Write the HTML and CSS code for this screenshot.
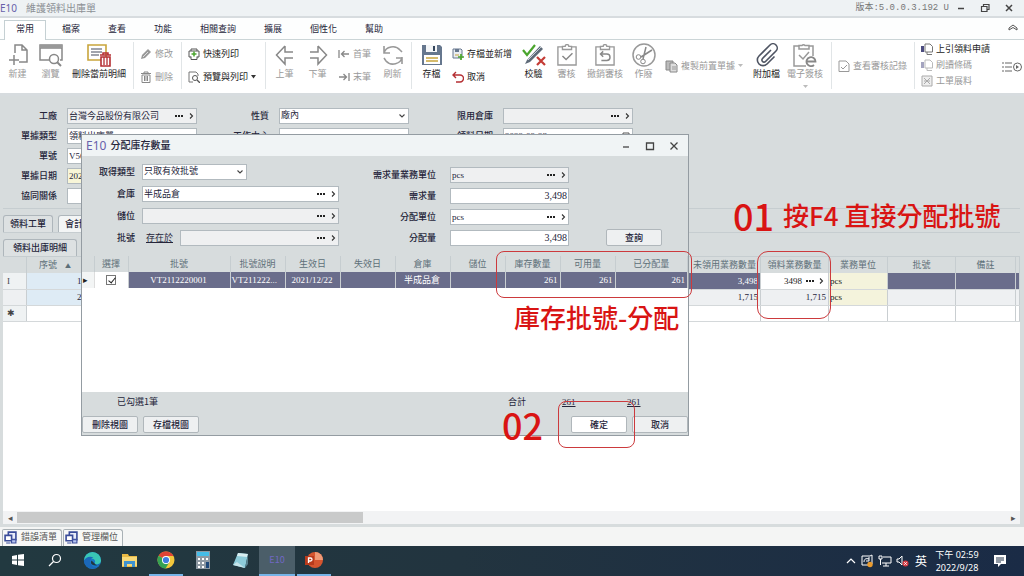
FILE: index.html
```html
<!DOCTYPE html>
<html lang="zh-Hant">
<head>
<meta charset="utf-8">
<title>維護領料出庫單</title>
<link rel="stylesheet" href="styles.css">
</head>
<body>
<svg class="defs" aria-hidden="true">
  <symbol id="more" viewBox="0 0 10 6"><path d="M1 2h2v2H1zM4 2h2v2H4zM7 2h2v2H7z" fill="#222"/></symbol>
  <symbol id="next" viewBox="0 0 6 8"><path d="M2 1.500 4.500 4 2 6.500" fill="none" stroke="#333" stroke-width="1.100"/></symbol>
  <symbol id="down" viewBox="0 0 8 6"><path d="M1.500 1.500 4 4l2.500-2.500" fill="none" stroke="#444" stroke-width="1.100"/></symbol>
  <symbol id="clip" viewBox="0 0 22 24"><path d="M6 3H1v20h20V3h-5M6 2.500h3a2 2 0 0 1 4 0h3V6H6z" fill="none" stroke="#999" stroke-width="1.500"/></symbol>
  <symbol id="doc" viewBox="0 0 12 12"><path d="M4 1h5l2.500 2.500V9H4z" fill="#fff" stroke="#777"/><path d="M6 9v2.500h5" fill="none" stroke="#777"/><path d="M0 3h3v6H0z" fill="#4c4c80"/></symbol>
  <symbol id="windows" viewBox="0 0 12 12"><path d="M4 1h7v7H4z" fill="#e8ecfa" stroke="#3a4c9a" stroke-width="1.500"/><path d="M1 4h6v5H1z" fill="#fff" stroke="#3a4c9a" stroke-width="1.500"/><path d="M7 8h4v3H7zM2 11h4" fill="#b7c6f3" stroke="#3a4c9a"/></symbol>
</svg>
<div class="app">
  <header class="titlebar">
    <span class="brand">E10</span>
    <span class="app-title">維護領料出庫單</span>
    <span class="version">版本:5.0.0.3.192 U</span>
    <div class="win-buttons">
      <button type="button" aria-label="最小化"><svg width="10" height="10" viewBox="0 0 10 10"><path d="M2 5.500h6" stroke="#444" stroke-width="1.500"/></svg></button>
      <button type="button" aria-label="還原"><svg width="10" height="10" viewBox="0 0 10 10"><path d="M1.500 3.500h5.500v5H1.500zM3.500 3.500v-2h5.500v5H7" fill="none" stroke="#444" stroke-width="1.200"/></svg></button>
      <button type="button" aria-label="關閉"><svg width="10" height="10" viewBox="0 0 10 10"><path d="m2 2 6 6m0-6L2 8" stroke="#444" stroke-width="1.500"/></svg></button>
    </div>
  </header>

  <nav class="tabs">
    <button type="button" class="tab active">常用</button>
    <button type="button" class="tab">檔案</button>
    <button type="button" class="tab">查看</button>
    <button type="button" class="tab">功能</button>
    <button type="button" class="tab">相關查詢</button>
    <button type="button" class="tab">擴展</button>
    <button type="button" class="tab">個性化</button>
    <button type="button" class="tab">幫助</button>
    <button type="button" class="collapse" aria-label="收合"><svg width="10" height="8" viewBox="0 0 10 8"><path d="m1 4 4-3 4 3v2L5 3.500 1 6z" fill="none" stroke="#555"/></svg></button>
  </nav>

  <div class="ribbon">
    <div class="group lead">
      <button type="button" class="big off"><svg width="20" height="24" viewBox="0 0 20 24"><path d="M7 10V2h7l5 5v12h-8M14 2v5h5M6 12v10M1 17h10" fill="none" stroke="#888" stroke-width="1.500"/></svg>新建</button>
      <button type="button" class="big off"><svg width="24" height="24" viewBox="0 0 24 24"><path d="M10 17H1V2h22v15h-2M1 5h22" fill="none" stroke="#888" stroke-width="1.500"/><path d="M1 2h22v3H1z" fill="#999"/><circle cx="15" cy="16" r="4.500" fill="#fff" stroke="#888" stroke-width="1.500"/><path d="m18 19 4 4" stroke="#888" stroke-width="2"/></svg>瀏覽</button>
      <button type="button" class="big wide"><svg width="26" height="24" viewBox="0 0 26 24"><path d="M2 2h18v15H2z" fill="#fff" stroke="#c9a53c" stroke-width="1.600"/><path d="M5 6h11M5 9h11M5 12h8" stroke="#444a5c" stroke-width="1.200"/><path d="M14 12h11M17 12v-2h5v2" fill="none" stroke="#b52f33" stroke-width="1.500"/><path d="M15 14h9v9h-9z" fill="#fff" stroke="#b52f33" stroke-width="1.600"/><path d="M18 14v8M21 14v8" stroke="#b52f33" stroke-width="1.300"/></svg>刪除當前明細</button>
    </div>
    <div class="group">
      <div class="stack">
        <button type="button" class="small off"><svg width="12" height="12" viewBox="0 0 12 12"><path d="m1 11 1-4 6-6 3 3-6 6z" fill="#999"/><path d="m3 9 5-5" stroke="#ddd"/></svg>修改</button>
        <button type="button" class="small off"><svg width="12" height="12" viewBox="0 0 12 12"><path d="M2 4h8v7.500H2z" fill="none" stroke="#888"/><path d="M1 2.500h10M4 2.500V1h4v1.500M4.500 5v5M6 5v5M7.500 5v5" fill="none" stroke="#888"/></svg>刪除</button>
      </div>
    </div>
    <div class="group">
      <div class="stack print">
        <button type="button" class="small"><svg width="12" height="12" viewBox="0 0 12 12"><path d="M3 3V1h6v2M3 9H1V3h10v6H9M3 8.500v3h6v-3" fill="none" stroke="#555"/><path d="M6 3.500v5M3.500 6h5" stroke="#4ba52e" stroke-width="1.500"/></svg>快速列印</button>
        <button type="button" class="small"><svg width="12" height="12" viewBox="0 0 12 12"><path d="M5 11H1V1h7l2 2v2" fill="none" stroke="#777"/><circle cx="7" cy="7" r="2.500" fill="none" stroke="#555"/><path d="m9 9 3 3" stroke="#555" stroke-width="1.300"/></svg>預覽與列印<svg class="caret" width="5" height="4" viewBox="0 0 5 4"><path d="M0 0h5L2.500 3.500z" fill="#333"/></svg></button>
      </div>
    </div>
    <div class="group nav-group">
      <button type="button" class="big off"><svg width="20" height="24" viewBox="0 0 20 24"><path d="M10 3 1.500 12l8.500 9v-6h8M10 3v6h8" fill="none" stroke="#888" stroke-width="1.500"/></svg>上筆</button>
      <button type="button" class="big off"><svg width="20" height="24" viewBox="0 0 20 24"><path d="M10 3l8.500 9-8.500 9v-6H2M10 3v6H2" fill="none" stroke="#888" stroke-width="1.500"/></svg>下筆</button>
      <div class="stack">
        <button type="button" class="small off"><svg width="12" height="12" viewBox="0 0 12 12"><path d="M1 2v8M11 6H3.500M6.500 3l-3 3 3 3" fill="none" stroke="#888" stroke-width="1.300"/></svg>首筆</button>
        <button type="button" class="small off"><svg width="12" height="12" viewBox="0 0 12 12"><path d="M11 2v8M1 6h7.500M5.500 3l3 3-3 3" fill="none" stroke="#888" stroke-width="1.300"/></svg>末筆</button>
      </div>
      <button type="button" class="big off"><svg width="20" height="24" viewBox="0 0 20 24"><path d="M1 10a9 8 0 0 1 16-3l2 2M1 3v7h6M19 14a9 8 0 0 1-16 4l-2-3M19 21v-6h-6" fill="none" stroke="#999" stroke-width="1.600"/></svg>刷新</button>
    </div>
    <div class="group nav-group tools">
      <button type="button" class="big"><svg width="20" height="24" viewBox="0 0 20 24"><path d="M0 2h18l2 2v18H0z" fill="#66778e"/><path d="M4 2h11v7H4z" fill="#f4f6f8"/><path d="M11 3h2v5h-2z" fill="#34455c"/><path d="M2 12h16v9H2z" fill="#fff"/><path d="M4 15h12M4 18h12" stroke="#c9a53c" stroke-width="1.500"/></svg>存檔</button>
      <div class="stack save">
        <button type="button" class="small"><svg width="12" height="12" viewBox="0 0 12 12"><path d="M1 1h8l1 1v8H1z" fill="#e9edf2" stroke="#66778e"/><path d="M3 1h4v3H3z" fill="#66778e"/><path d="M3 7h4" stroke="#c9a53c"/><path d="M9 6v6M6 9h6" stroke="#4ba52e" stroke-width="1.700"/></svg>存檔並新增</button>
        <button type="button" class="small"><svg width="12" height="12" viewBox="0 0 12 12"><path d="M4 1 1 4l3 3M1 4h7a3 3 0 0 1 0 7H4" fill="none" stroke="#b52f33" stroke-width="1.400"/></svg>取消</button>
      </div>
      <button type="button" class="big"><svg width="24" height="24" viewBox="0 0 24 24"><path d="m5 17 13-14 3 3L8 19l-5 2z" fill="#5e6a78"/><path d="M6 17 19 4" stroke="#c8d0d8"/><path d="m1 7 4 5 8-10" fill="none" stroke="#4ba52e" stroke-width="2.200"/><path d="m15 14 8 8m0-8-8 8" stroke="#c43b35" stroke-width="2.200"/></svg>校驗</button>
      <button type="button" class="big off"><svg width="20" height="24" viewBox="0 0 22 24"><use href="#clip"/><path d="m6 13 4 4 7-7" fill="none" stroke="#888" stroke-width="1.600"/></svg>審核</button>
      <button type="button" class="big mid off"><svg width="20" height="24" viewBox="0 0 22 24"><use href="#clip"/><path d="M9 8 6 11l3 3M6 11h7a3 3 0 0 1 0 7H7" fill="none" stroke="#888" stroke-width="1.600"/></svg>撤銷審核</button>
      <button type="button" class="big off"><svg width="24" height="24" viewBox="0 0 24 24"><circle cx="12" cy="12" r="11" fill="none" stroke="#999" stroke-width="1.500"/><path d="M20 7 9 14M14 4l-3 12" stroke="#888" stroke-width="1.500"/><circle cx="6.500" cy="14" r="2.300" fill="none" stroke="#888"/><circle cx="11" cy="18.500" r="2.300" fill="none" stroke="#888"/></svg>作廢</button>
      <button type="button" class="small copy off"><svg width="13" height="14" viewBox="0 0 13 14"><path d="M1 2h7v9H1z" fill="#bbb" stroke="#888"/><path d="M5 4h5l2 2v7H5z" fill="#ddd" stroke="#888"/><path d="M7 8h4M7 10h4" stroke="#999"/></svg>複製前置單據<svg class="caret" width="5" height="4" viewBox="0 0 5 4"><path d="M0 0h5L2.500 3z" fill="#bbb"/></svg></button>
      <button type="button" class="big"><svg width="24" height="24" viewBox="0 0 24 24"><path d="M16 7 7.500 15.500a2 2 0 0 0 3 3L21 8a4 4 0 0 0-6-6L4 13a5.500 5.500 0 0 0 8 8l7.500-7.500" fill="none" stroke="#4e5462" stroke-width="1.600"/></svg>附加檔</button>
      <button type="button" class="big mid off"><svg width="24" height="24" viewBox="0 0 24 24"><path d="M6 3H1v20h12M16 3h4v10M6 2.500h3a2 2 0 0 1 3 0h4V6H6zM6 12l4 4 6-7" fill="none" stroke="#999" stroke-width="1.500"/><path d="M14 18.500h8.500a4.500 4.500 0 1 0-1.500 3.500" fill="none" stroke="#888" stroke-width="1.800"/></svg>電子簽核<svg class="under" width="5" height="4" viewBox="0 0 5 4"><path d="M0 0h5L2.500 3z" fill="#bbb"/></svg></button>
    </div>
    <div class="group">
      <button type="button" class="small off"><svg width="12" height="12" viewBox="0 0 12 12"><path d="M1 1h7l3 3v7.500H1z" fill="none" stroke="#999"/><path d="m3 7 2 2 4-4" fill="none" stroke="#999"/></svg>查看審核記錄</button>
    </div>
    <div class="group last">
      <div class="stack tight">
        <button type="button" class="small"><svg width="12" height="12"><use href="#doc"/></svg>上引領料申請</button>
        <button type="button" class="small off"><svg class="dim" width="12" height="12"><use href="#doc"/></svg>刷讀條碼</button>
        <button type="button" class="small off"><svg width="12" height="12" viewBox="0 0 12 12"><path d="M1 1h10v10H1z" fill="#eee" stroke="#aaa"/><path d="m3 3 6 6M9 3 3 9M3 6h2M7 6h2" stroke="#aaa"/></svg>工單展料</button>
      </div>
    </div>
    <button type="button" class="more-tools" aria-label="更多"><svg width="20" height="12" viewBox="0 0 20 12"><path d="M0 2h2M3 2h7M0 6h2M3 6h7M0 10h2M3 10h7" stroke="#666"/><circle cx="15.500" cy="6" r="4" fill="none" stroke="#666"/><path d="m14 4 3 2-3 2z" fill="#666"/></svg></button>
  </div>

  <main class="workspace">
    <form class="main-form">
      <label for="plant">工廠</label>
      <div class="field dim-field"><input id="plant" value="台灣今品股份有限公司"><button type="button" aria-label="選擇工廠"><svg width="10" height="6"><use href="#more"/></svg></button><button type="button" aria-label="開啟工廠"><svg width="6" height="8"><use href="#next"/></svg></button></div>
      <label for="nature">性質</label>
      <div class="field"><select id="nature"><option>廠內</option></select><svg class="chev" width="8" height="6"><use href="#down"/></svg></div>
      <label for="limit">限用倉庫</label>
      <div class="field dim-field"><input id="limit"><button type="button" aria-label="選擇限用倉庫"><svg width="10" height="6"><use href="#more"/></svg></button><button type="button" aria-label="開啟限用倉庫"><svg width="6" height="8"><use href="#next"/></svg></button></div>
      <label for="doctype">單據類型</label>
      <div class="field"><input id="doctype" value="領料出庫單"></div>
      <label for="center">工作中心</label>
      <div class="field"><input id="center"></div>
      <label for="picked">領料日期</label>
      <div class="field"><input id="picked" value="2022-09-28"><svg class="chev" width="8" height="8" viewBox="0 0 8 8"><path d="M1 1h6v6H1zM1 3h6" fill="none" stroke="#555"/></svg></div>
      <label class="first" for="docno">單號</label>
      <div class="field"><input id="docno" value="V56"></div>
      <label class="first" for="docdate">單據日期</label>
      <div class="field yellow"><input id="docdate" value="2022-09-28"></div>
      <label class="first" for="coop">協同關係</label>
      <div class="field"><input id="coop"></div>
    </form>
    <div class="page-tabs">
      <button type="button" class="page-tab on">領料工單</button>
      <button type="button" class="page-tab">會計</button>
    </div>
    <div class="sub-tabs"><button type="button" class="page-tab on">領料出庫明細</button></div>
    <section class="grid-panel">
      <table class="grid">
        <colgroup><col class="c-mark"><col class="c-seq"><col><col class="c-open"><col class="c-qty"><col class="c-unit"><col class="c-lot"><col class="c-note"><col class="c-end"></colgroup>
        <thead><tr><th></th><th>序號 <span class="sort">▲</span></th><th></th><th>未領用業務數量</th><th>領料業務數量</th><th>業務單位</th><th>批號</th><th>備註</th><th></th></tr></thead>
        <tbody>
          <tr class="picked"><td class="mark">I</td><td class="seq">1</td><td></td><td class="num">3,498</td><td class="edit"><div class="cell-edit"><span>3498</span><svg width="10" height="6"><use href="#more"/></svg><svg width="6" height="8"><use href="#next"/></svg></div></td><td class="unit">pcs</td><td></td><td></td><td></td></tr>
          <tr class="alt"><td class="mark"></td><td class="seq">2</td><td></td><td class="num">1,715</td><td class="num">1,715</td><td class="unit">pcs</td><td></td><td></td><td></td></tr>
          <tr><td class="mark">✱</td><td></td><td></td><td></td><td></td><td></td><td></td><td></td><td></td></tr>
        </tbody>
      </table>
      <div class="scrollbar"><span class="arrow">◂</span><div class="track"><div class="thumb"></div></div><span class="arrow">▸</span></div>
    </section>
  </main>

  <div class="bottom-tabs">
    <button type="button"><svg width="13" height="13" viewBox="0 0 12 12"><use href="#windows"/></svg>錯誤清單</button>
    <button type="button"><svg width="13" height="13" viewBox="0 0 12 12"><use href="#windows"/></svg>管理欄位</button>
  </div>

  <footer class="taskbar">
    <button type="button" aria-label="開始"><svg width="14" height="14" viewBox="0 0 14 14"><path d="m1 3 5-1v4.500H1zM7 1.800 13 1v5.500H7zM1 7.500h5V12l-5-1zM7 7.500h6V13l-6-.8z" fill="#fff"/></svg></button>
    <button type="button" aria-label="搜尋"><svg width="14" height="14" viewBox="0 0 14 14"><circle cx="8.500" cy="5.500" r="4" fill="none" stroke="#fff" stroke-width="1.200"/><path d="m5.500 8.500-4.500 4.500" stroke="#fff" stroke-width="1.300"/></svg></button>
    <button type="button" aria-label="Edge"><svg width="19" height="19" viewBox="0 0 20 20"><circle cx="10" cy="10" r="9" fill="#1978c8"/><path d="M1 10a9 9 0 0 1 18 0c0 4-5 5-7 3 2-2 0-5-3-5-4 0-7 2-8 2z" fill="#39c6b5"/><path d="M1 10c2-4 7-5 10-3-4 0-5 6-1 9 2 1 5 1 7-1a9 9 0 0 1-16-5z" fill="#1b68b9"/><path d="M9 10c-2 3 1 6 6 5l3-1a4 4 0 0 1-6-1z" fill="#223740"/></svg></button>
    <button type="button" aria-label="檔案總管"><svg width="17" height="16" viewBox="0 0 17 16"><path d="M1 2h6l1 2h8v11H1z" fill="#e9b944"/><path d="M1 5h15v9H1z" fill="#f8d978"/><path d="M3 9h11v6h-3v-3H6v3H3z" fill="#3f93d0"/></svg></button>
    <button type="button" class="running" aria-label="Chrome"><svg width="18" height="18" viewBox="0 0 18 18"><circle cx="9" cy="9" r="8.500" fill="#f3c73b"/><path d="M9 9 1.600 4.800A8.500 8.500 0 0 1 16.500 5H9z" fill="#df4436"/><path d="M9 9 1.600 4.800A8.500 8.500 0 0 0 8.500 17.500l4-6.500z" fill="#35a253"/><circle cx="9" cy="9" r="4" fill="#fff"/><circle cx="9" cy="9" r="3.100" fill="#3f7de0"/></svg></button>
    <button type="button" aria-label="小算盤"><svg width="14" height="18" viewBox="0 0 14 18"><path d="M0 0h14v18H0z" fill="#8d99a3"/><path d="M1 1h12v4H1z" fill="#45bde8"/><path d="M2 7h2v2H2zM6 7h2v2H6zM10 7h2v2h-2zM2 11h2v2H2zM6 11h2v2H6zM2 15h2v2H2zM6 15h2v2H6z" fill="#fff"/><path d="M10 11h3v6h-3z" fill="#1d4778"/></svg></button>
    <button type="button" aria-label="記事本"><svg width="17" height="17" viewBox="0 0 17 17"><path d="m6 1 10 1-3 14-12-3z" fill="#8dcbd9"/><path d="m6 1 10 1-1 3-10-1z" fill="#d8eef1"/><path d="m13 16 3-4V2z" fill="#567f8c"/><path d="m1 13 4-3 8 6z" fill="#c6e4ea"/></svg></button>
    <button type="button" class="running current">E10</button>
    <button type="button" class="running" aria-label="PowerPoint"><svg width="18" height="18" viewBox="0 0 18 18"><circle cx="10" cy="9" r="8" fill="#d6552f"/><path d="M10 1a8 8 0 0 1 8 8h-8z" fill="#f09a76"/><path d="M0 5h9v9H0z" fill="#b93a1c"/><path d="M3.500 12V7h2a1.500 1.500 0 0 1 0 3h-2" fill="none" stroke="#fff" stroke-width="1.300"/></svg></button>
    <div class="tray">
      <svg width="10" height="8" viewBox="0 0 10 8"><path d="m1 6 4-4 4 4" fill="none" stroke="#fff" stroke-width="1.200"/></svg>
      <svg width="14" height="14" viewBox="0 0 14 14"><path d="M2 2h8l2-1v9M2 2v9h6" fill="none" stroke="#fff"/><path d="M4 8c0-3 2-4 5-3M9 3v4H6" fill="none" stroke="#fff"/><circle cx="10" cy="10.500" r="2.700" fill="#eb9b2d"/></svg>
      <svg width="14" height="14" viewBox="0 0 14 14"><path d="M5 3h8v6H4M8 9v3M5 12h6M1 2h3v3H1zM2.500 5v6" fill="none" stroke="#fff"/></svg>
      <svg width="14" height="14" viewBox="0 0 14 14"><path d="M1 5h2l3-3v9L3 8H1z" fill="none" stroke="#fff"/><circle cx="9.500" cy="9.500" r="3" fill="#d33a43"/><path d="m8.300 8.300 2.400 2.400m0-2.400-2.400 2.400" stroke="#fff"/></svg>
      <span class="ime">英</span>
      <div class="clock"><span>下午 02:59</span><span>2022/9/28</span></div>
      <svg class="notice" width="14" height="14" viewBox="0 0 14 14"><path d="M1 1h12v9H8l-3 3v-3H1z" fill="#fff"/><path d="M3 4h8M3 6h8M3 8h5" stroke="#24354b"/></svg>
    </div>
  </footer>

  <section class="dialog" role="dialog" aria-labelledby="dlg-title">
    <header class="dialog-bar">
      <span class="brand">E10</span>
      <h1 id="dlg-title">分配庫存數量</h1>
      <div class="win-buttons">
        <button type="button" aria-label="最小化"><svg width="10" height="10" viewBox="0 0 10 10"><path d="M2 6h6" stroke="#444" stroke-width="1.300"/></svg></button>
        <button type="button" aria-label="最大化"><svg width="10" height="10" viewBox="0 0 10 10"><path d="M1.500 2h7v6.500h-7z" fill="none" stroke="#444" stroke-width="1.300"/></svg></button>
        <button type="button" aria-label="關閉"><svg width="10" height="10" viewBox="0 0 10 10"><path d="m1.500 1.500 7 7m0-7-7 7" stroke="#444" stroke-width="1.300"/></svg></button>
      </div>
    </header>
    <form class="dialog-form">
      <div class="col-left">
        <label for="mode">取得類型</label>
        <div class="field short"><select id="mode"><option>只取有效批號</option></select><svg class="chev" width="8" height="6"><use href="#down"/></svg></div>
        <label for="wh">倉庫</label>
        <div class="field"><input id="wh" value="半成品倉"><button type="button" aria-label="選擇倉庫"><svg width="10" height="6"><use href="#more"/></svg></button><button type="button" aria-label="開啟倉庫"><svg width="6" height="8"><use href="#next"/></svg></button></div>
        <label for="bin">儲位</label>
        <div class="field dim-field"><input id="bin"><button type="button" aria-label="選擇儲位"><svg width="10" height="6"><use href="#more"/></svg></button><button type="button" aria-label="開啟儲位"><svg width="6" height="8"><use href="#next"/></svg></button></div>
        <label for="lot">批號</label>
        <div class="lot-row"><a href="#lot">存在於</a><div class="field dim-field"><input id="lot"><button type="button" aria-label="選擇批號"><svg width="10" height="6"><use href="#more"/></svg></button><button type="button" aria-label="開啟批號"><svg width="6" height="8"><use href="#next"/></svg></button></div></div>
      </div>
      <div class="col-right">
        <label for="need-unit">需求量業務單位</label>
        <div class="field dim-field"><input id="need-unit" value="pcs"><button type="button" aria-label="選擇需求單位"><svg width="10" height="6"><use href="#more"/></svg></button><button type="button" aria-label="開啟需求單位"><svg width="6" height="8"><use href="#next"/></svg></button></div>
        <label for="need">需求量</label>
        <div class="field"><input id="need" class="amount" value="3,498"></div>
        <label for="give-unit">分配單位</label>
        <div class="field"><input id="give-unit" value="pcs"><button type="button" aria-label="選擇分配單位"><svg width="10" height="6"><use href="#more"/></svg></button><button type="button" aria-label="開啟分配單位"><svg width="6" height="8"><use href="#next"/></svg></button></div>
        <label for="give">分配量</label>
        <div class="field"><input id="give" class="amount" value="3,498"></div>
      </div>
      <button type="button" class="btn query">查詢</button>
    </form>
    <div class="dialog-grid">
      <table class="grid">
        <colgroup><col class="d-mark"><col class="d-pick"><col class="d-lot"><col class="d-std"><col class="d-std"><col class="d-std"><col class="d-std"><col class="d-std"><col class="d-std"><col class="d-std"><col></colgroup>
        <thead><tr><th></th><th>選擇</th><th>批號</th><th>批號說明</th><th>生效日</th><th>失效日</th><th>倉庫</th><th>儲位</th><th>庫存數量</th><th>可用量</th><th>已分配量</th></tr></thead>
        <tbody><tr class="picked"><td class="pointer">▸</td><td class="check"><input type="checkbox" checked aria-label="選擇 VT2112220001"></td><td class="mid-text">VT2112220001</td><td>VT211222...</td><td class="mid-text">2021/12/22</td><td></td><td class="mid-text">半成品倉</td><td></td><td class="num">261</td><td class="num">261</td><td class="num">261</td></tr></tbody>
      </table>
    </div>
    <div class="totals"><span class="count">已勾選1筆</span><span class="sum-label">合計</span><span class="sum">261</span><span class="sum">261</span></div>
    <div class="dialog-actions">
      <button type="button" class="btn">刪除視圖</button>
      <button type="button" class="btn">存檔視圖</button>
      <button type="button" class="btn ok">確定</button>
      <button type="button" class="btn">取消</button>
    </div>
  </section>

  <div class="ring ring-stock"></div>
  <div class="ring ring-qty"></div>
  <div class="ring ring-ok"></div>
  <div class="callout step-one"><b>01</b><span>按F4 直接分配批號</span></div>
  <div class="callout stock-note"><span>庫存批號-分配</span></div>
  <div class="callout step-two"><b>02</b></div>
</div>
</body>
</html>
```
FILE: styles.css
```css
* { box-sizing: border-box; }
body {
  margin: 0;
  font: 9px/12px "Noto Sans CJK TC", sans-serif;
  color: #25253a;
  background: #d7dcdd;
}
button, input, select { font: inherit; color: inherit; margin: 0; padding: 0; border: 0; background: none; border-radius: 0; }
svg { flex: none; display: block; }
.defs { position: absolute; width: 0; height: 0; }
.app { position: relative; height: 100vh; display: flex; flex-direction: column; overflow: hidden; }

.titlebar { display: flex; align-items: center; height: 18px; background: #eef2f4; border-bottom: 2px solid #d7dcdf; }
.brand { color: #6760aa; font: 12px/14px "Noto Sans", sans-serif; }
.titlebar .brand { font-size: 10px; }
.app-title { margin-left: 9px; font-size: 10px; color: #8c9095; }
.version { margin-left: auto; font: 9px/12px "Liberation Mono", "Noto Sans CJK TC", monospace; color: #777; }
.win-buttons { display: flex; gap: 14px; }
.titlebar .win-buttons { margin: 0 10px 0 7px; }
.win-buttons button { width: 10px; height: 10px; }

.tabs { display: flex; gap: 4px; height: 22px; padding: 2px 4px 0; background: #fdfefe; border-bottom: 1px solid #cbd5d7; }
.tab { height: 20px; padding: 0 11px 3px; border: 1px solid transparent; border-bottom: 0; }
.tab.active { background: #fff; border-color: #c5d0d3; }
.collapse { margin-left: auto; padding: 0 2px 3px 0; }

.ribbon { display: flex; height: 56px; background: #fff; border-bottom: 3px solid #d7dcdf; }
.group { display: flex; flex: none; align-items: center; padding: 0 7px 0 6px; border-right: 1px solid #e1e5e7; margin: 2px 0 4px; }
.lead { padding: 0 2px 0 1px; }
.nav-group { padding: 0 2px; }
.tools { padding: 0 4px 0 3px; }
.last { border-right: 0; padding-right: 8px; }
.big { display: flex; flex-direction: column; align-items: center; gap: 1px; width: 33px; height: 46px; position: relative; white-space: nowrap; color: #222; }
.mid { width: 44px; }
.wide { width: 64px; }
.small { display: flex; align-items: center; gap: 3px; white-space: nowrap; color: #222; }
.off { color: #999; }
.stack { display: flex; flex-direction: column; gap: 11px; align-items: flex-start; width: 34px; }
.nav-group .stack { margin: 0 4px; }
.stack.print { width: 70px; }
.stack.save { width: 61px; }
.stack.tight { width: 70px; gap: 4px; padding-bottom: 1px; }
.copy { width: 80px; margin: 0 5px; }
.dim { opacity: 0.5; }
.under { position: absolute; left: 20px; bottom: 0; }
.more-tools { margin: 0 2px 0 auto; }

.workspace { flex: 1; display: flex; flex-direction: column; min-height: 0; padding: 0 4px 3px 3px; }
.main-form {
  display: grid;
  grid-template-columns: 54px 130px 62px 130px 74px 130px;
  grid-auto-rows: 16px;
  gap: 4px 10px;
  padding: 12px 0 4px;
  border-bottom: 1px solid #c6cdd0;
}
label { text-align: right; line-height: 15px; font-weight: 500; white-space: nowrap; }
.main-form .first { grid-column: 1; }
.field { display: flex; align-items: center; min-width: 0; height: 16px; background: #fff; border: 1px solid #b2babf; position: relative; }
.dim-field { background: #eff0f1; }
.yellow { background: #f8f6d8; }
.field input, .field select { flex: 1; min-width: 0; width: 0; height: 14px; padding: 0 0 1px 1px; line-height: 13px; appearance: none; font-family: "Liberation Serif", "Noto Sans CJK TC", serif; outline: 0; }
.field button { display: flex; justify-content: center; width: 14px; }
.field button:last-child { width: 10px; }
.field .amount { text-align: right; padding-right: 1px; font-size: 10px; }
.chev { margin-right: 2px; }

.page-tabs { display: flex; gap: 5px; align-items: flex-end; height: 24px; border-bottom: 1px solid #c6cdd0; }
.page-tab { height: 17px; padding: 0 6px; border: 1px solid #aeb6bb; border-bottom: 0; border-radius: 3px 3px 0 0; background: #f3f5f5; font-weight: 500; white-space: nowrap; }
.page-tab.on { background: #dde1e2; }
.sub-tabs { display: flex; align-items: flex-end; height: 24px; border-bottom: 1px solid #c6cdd0; }
.sub-tabs .page-tab { padding: 0 9px; }

.grid-panel { flex: 1; display: flex; flex-direction: column; background: #fff; }
.grid { width: 100%; table-layout: fixed; border-collapse: collapse; }
.grid th { height: 16px; padding: 0; font-weight: 400; color: #5d6f78; background: #d7dcdd; border-right: 1px solid #c6cdd0; white-space: nowrap; }
.grid td { height: 16px; padding: 0 2px 0 1px; line-height: 12px; font-family: "Liberation Serif", "Noto Sans CJK TC", serif; border-right: 1px solid #c9ced1; border-bottom: 1px solid #d4d8da; white-space: nowrap; overflow: hidden; }
.sort { font-size: 6px; margin-left: 6px; }
.c-mark { width: 23px; }
.c-seq { width: 58px; }
.c-open { width: 72px; }
.c-qty { width: 68px; }
.c-unit { width: 59px; }
.c-lot { width: 68px; }
.c-note { width: 60px; }
.c-end { width: 4px; }
.grid .picked td { background: #6a6d8b; color: #fff; }
.grid .alt td { background: #eef0f2; }
.grid .mark, .grid .picked .mark { background: #eff2f3; color: #444; padding-left: 4px; }
.grid .picked .seq, .grid .alt .seq { background: #deebf5; color: #25253a; text-align: right; }
.num { text-align: right; }
.grid .picked .edit { background: #fff; color: #222; }
.cell-edit { display: flex; align-items: center; justify-content: flex-end; gap: 3px; padding-right: 2px; }
.grid .picked .unit, .grid .alt .unit { background: #f4f3dc; color: #222; }

.scrollbar { display: flex; align-items: center; height: 13px; margin-top: auto; background: #f2f3f4; }
.arrow { width: 14px; text-align: center; color: #555; }
.track { flex: 1; height: 11px; }
.thumb { width: 35%; height: 100%; background: #c9caca; }

.bottom-tabs { display: flex; gap: 1px; height: 19px; padding: 2px 2px 0; background: #f4f5f4; }
.bottom-tabs button { display: flex; align-items: center; gap: 4px; padding: 0 4px 2px 1px; background: #f7f8f7; border: 1px solid #a9b1b5; border-radius: 2px 3px 0 0; color: #555; border-bottom: 0; }

.taskbar { display: flex; gap: 1px; height: 30px; background: linear-gradient(90deg, #223940, #22343f 45%, #1a2b46); color: #fff; }
.taskbar button { display: flex; align-items: center; justify-content: center; width: 36px; border-bottom: 2px solid transparent; }
.taskbar .running { border-image: linear-gradient(90deg, transparent 8%, #76b4e8 8%, #76b4e8 92%, transparent 92%) 2; }
.taskbar .current { background: #4b5e69; color: #7168c4; border-image: none; border-color: #76b4e8; }
.tray { display: flex; align-items: center; gap: 4px; margin-left: auto; padding-right: 3px; }
.ime { font-size: 12px; margin-left: 1px; }
.clock { display: flex; flex-direction: column; width: 52px; text-align: center; font: 9px/13px "Noto Sans", "Noto Sans CJK TC", sans-serif; }
.tray .notice { margin: 0 14px 0 6px; }

.dialog { position: absolute; left: 81px; top: 134px; width: 608px; background: #d7dcdd; border: 1px solid #949ca2; }
.dialog-bar { display: flex; align-items: center; height: 21px; padding: 0 9px 0 4px; background: #f0f4f5; }
.dialog-bar h1 { margin: 0 0 2px 4px; font-size: 10px; line-height: 14px; font-weight: 500; }
.dialog-bar .win-buttons { margin-left: auto; }
.dialog-form { display: flex; align-items: flex-end; height: 100px; padding-bottom: 10px; }
.col-left { display: grid; grid-template-columns: 53px 197px; grid-auto-rows: 16px; gap: 6px 7px; }
.col-right { display: grid; grid-template-columns: 97px 119px; grid-auto-rows: 16px; gap: 5px 14px; }
.short { width: 105px; }
.lot-row { display: flex; gap: 7px; padding-left: 4px; }
.lot-row .field { flex: 1; }
.lot-row a { color: inherit; line-height: 16px; }
.btn { width: 56px; height: 17px; border: 1px solid #b0b7bb; border-radius: 2px; background: #eef0f1; font-weight: 500; }
.query { margin-left: 37px; }
.dialog-grid { height: 136px; background: #fff; }
.dialog-grid .grid td { border-bottom: 0; }
.d-mark { width: 12px; }
.d-pick { width: 34px; }
.d-lot { width: 102px; }
.d-std { width: 55px; }
.grid .picked .pointer { background: #f3f5f5; color: #222; border-right-color: #ddd; }
.grid .picked .check { background: #fff; text-align: center; }
.check input { appearance: none; display: block; width: 10px; height: 10px; margin: 0 auto; border: 1px solid #777; position: relative; }
.check input::after { content: ""; position: absolute; left: 3px; top: 0; width: 3px; height: 6px; border: solid #222; border-width: 0 1px 1px 0; transform: rotate(40deg); }
.mid-text { text-align: center; }
.totals { display: flex; height: 24px; align-items: center; padding: 0 47px 4px 35px; }
.sum-label { margin-left: auto; }
.sum { width: 14px; margin-left: 36px; font-family: "Liberation Serif", serif; text-decoration: underline; }
.sum + .sum { margin-left: 51px; }
.dialog-actions { display: flex; gap: 5px; height: 19px; }
.dialog-actions .ok { margin-left: auto; background: #fff; }

.ring { position: absolute; border: 1px solid #cc3a3d; border-radius: 8px; pointer-events: none; }
.ring-stock { left: 496px; top: 251px; width: 196px; height: 47px; }
.ring-qty { left: 757px; top: 251px; width: 74px; height: 68px; border-radius: 11px; }
.ring-ok { left: 558px; top: 401px; width: 77px; height: 47px; }
.callout { position: absolute; display: flex; align-items: center; gap: 9px; color: #d91413; font-size: 26px; line-height: 28px; font-weight: 500; white-space: nowrap; pointer-events: none; }
.callout b { font-size: 36px; font-weight: 500; }
.step-one { left: 733px; top: 201px; }
.stock-note { left: 514px; top: 303px; }
.step-two { left: 502px; top: 410px; }
```
